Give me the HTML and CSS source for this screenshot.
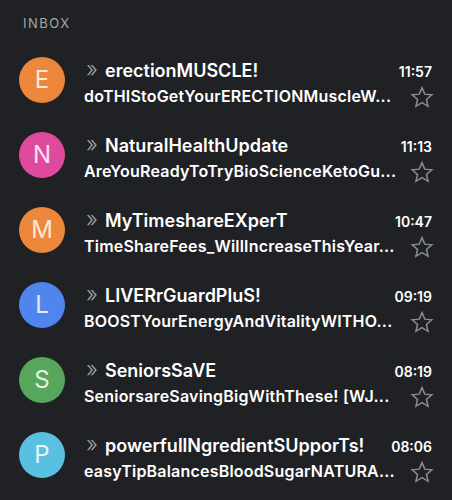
FILE: index.html
```html
<!DOCTYPE html>
<html>
<head>
<meta charset="utf-8">
<link rel="stylesheet" href="styles.css">
</head>
<body>
<div class="page">
  <div class="label">INBOX</div>
  <div class="list">
    <div class="row">
      <div class="avatar orange">E</div>
      <div class="body">
        <div class="top"><span class="chev">»</span><span class="sender">erectionMUSCLE!</span><span class="time">11:57</span></div>
        <div class="bottom"><span class="subject">doTHIStoGetYourERECTIONMuscleW...</span><svg class="star" viewBox="0 0 24 24"><path d="M12 2.6l2.75 6.55 7.05.6-5.350 4.65 1.6 6.9L12 17.6l-6.05 3.7 1.6-6.9L2.2 9.75l7.05-.6z"/></svg></div>
      </div>
    </div>
    <div class="row">
      <div class="avatar pink">N</div>
      <div class="body">
        <div class="top"><span class="chev">»</span><span class="sender">NaturalHealthUpdate</span><span class="time">11:13</span></div>
        <div class="bottom"><span class="subject">AreYouReadyToTryBioScienceKetoGu...</span><svg class="star" viewBox="0 0 24 24"><path d="M12 2.6l2.75 6.55 7.05.6-5.35 4.65 1.6 6.9L12 17.6l-6.05 3.7 1.6-6.9L2.2 9.75l7.05-.6z"/></svg></div>
      </div>
    </div>
    <div class="row">
      <div class="avatar orange">M</div>
      <div class="body">
        <div class="top"><span class="chev">»</span><span class="sender">MyTimeshareEXperT</span><span class="time">10:47</span></div>
        <div class="bottom"><span class="subject">TimeShareFees_WillIncreaseThisYear...</span><svg class="star" viewBox="0 0 24 24"><path d="M12 2.6l2.75 6.55 7.05.6-5.35 4.65 1.6 6.9L12 17.6l-6.05 3.7 1.6-6.9L2.2 9.75l7.05-.6z"/></svg></div>
      </div>
    </div>
    <div class="row">
      <div class="avatar blue">L</div>
      <div class="body">
        <div class="top"><span class="chev">»</span><span class="sender">LIVERrGuardPluS!</span><span class="time">09:19</span></div>
        <div class="bottom"><span class="subject">BOOSTYourEnergyAndVitalityWITHO...</span><svg class="star" viewBox="0 0 24 24"><path d="M12 2.6l2.75 6.55 7.05.6-5.35 4.65 1.6 6.9L12 17.6l-6.05 3.7 1.6-6.9L2.2 9.75l7.05-.6z"/></svg></div>
      </div>
    </div>
    <div class="row">
      <div class="avatar green">S</div>
      <div class="body">
        <div class="top"><span class="chev">»</span><span class="sender">SeniorsSaVE</span><span class="time">08:19</span></div>
        <div class="bottom"><span class="subject">SeniorsareSavingBigWithThese! [WJ...</span><svg class="star" viewBox="0 0 24 24"><path d="M12 2.6l2.75 6.55 7.05.6-5.35 4.65 1.6 6.9L12 17.6l-6.05 3.7 1.6-6.9L2.2 9.75l7.05-.6z"/></svg></div>
      </div>
    </div>
    <div class="row">
      <div class="avatar cyan">P</div>
      <div class="body">
        <div class="top"><span class="chev">»</span><span class="sender">powerfullNgredientSUpporTs!</span><span class="time">08:06</span></div>
        <div class="bottom"><span class="subject">easyTipBalancesBloodSugarNATURA...</span><svg class="star" viewBox="0 0 24 24"><path d="M12 2.6l2.75 6.55 7.05.6-5.35 4.65 1.6 6.9L12 17.6l-6.05 3.7 1.6-6.9L2.2 9.75l7.05-.6z"/></svg></div>
      </div>
    </div>
  </div>
</div>
</body>
</html>
```
FILE: styles.css
```css
html, body {
  margin: 0;
  padding: 0;
  background: #202124;
}
body {
  font-family: Inter, "Noto Sans", sans-serif;
  color: #f1f3f4;
  width: 452px;
  height: 500px;
  overflow: hidden;
}
.page {
  padding-top: 15px;
}
.label {
  padding-left: 23px;
  font-size: 13px;
  letter-spacing: 1.5px;
  color: #a3a6aa;
  line-height: 16px;
  height: 16px;
}
.list {
  margin-top: 11px;
}
.row {
  display: flex;
  align-items: center;
  height: 75px;
  padding: 0 20px 0 19px;
}
.avatar {
  width: 46px;
  height: 46px;
  border-radius: 50%;
  flex: none;
  display: flex;
  align-items: center;
  justify-content: center;
  font-size: 24px;
  color: #fce8d8;
  font-weight: 400;
}
.orange { background: #ec873b; }
.pink { background: #df4a9e; color: #fbe2f0; }
.blue { background: #4f85ec; color: #e5eefd; }
.green { background: #58a65c; color: #e4f3e5; }
.cyan { background: #5ac0e1; color: #e6f6fb; }
.body {
  flex: 1;
  margin-left: 19px;
  margin-top: 5px;
  min-width: 0;
  display: flex;
  flex-direction: column;
  gap: 3px;
}
.top {
  display: flex;
  align-items: baseline;
  height: 24px;
  line-height: 24px;
}
.chev {
  color: #9aa0a6;
  font-size: 22px;
  font-weight: 300;
  margin-left: 2px;
  width: 19px;
  flex: none;
}
.sender {
  font-size: 18px;
  font-weight: 600;
  flex: 1;
  white-space: nowrap;
  color: #ffffff;
}
.time {
  font-size: 14px;
  font-weight: 600;
  color: #ffffff;
  margin-left: 8px;
}
.bottom {
  display: flex;
  align-items: center;
  height: 24px;
}
.subject {
  font-size: 16px;
  font-weight: 600;
  letter-spacing: 0.2px;
  flex: 1;
  white-space: nowrap;
  overflow: hidden;
  color: #ffffff;
}
.star {
  width: 24px;
  height: 24px;
  flex: none;
  fill: none;
  stroke: #8a8d91;
  stroke-width: 1.5;
  stroke-linejoin: miter;
  margin-right: -2px;
  margin-top: 2px;
}
```
